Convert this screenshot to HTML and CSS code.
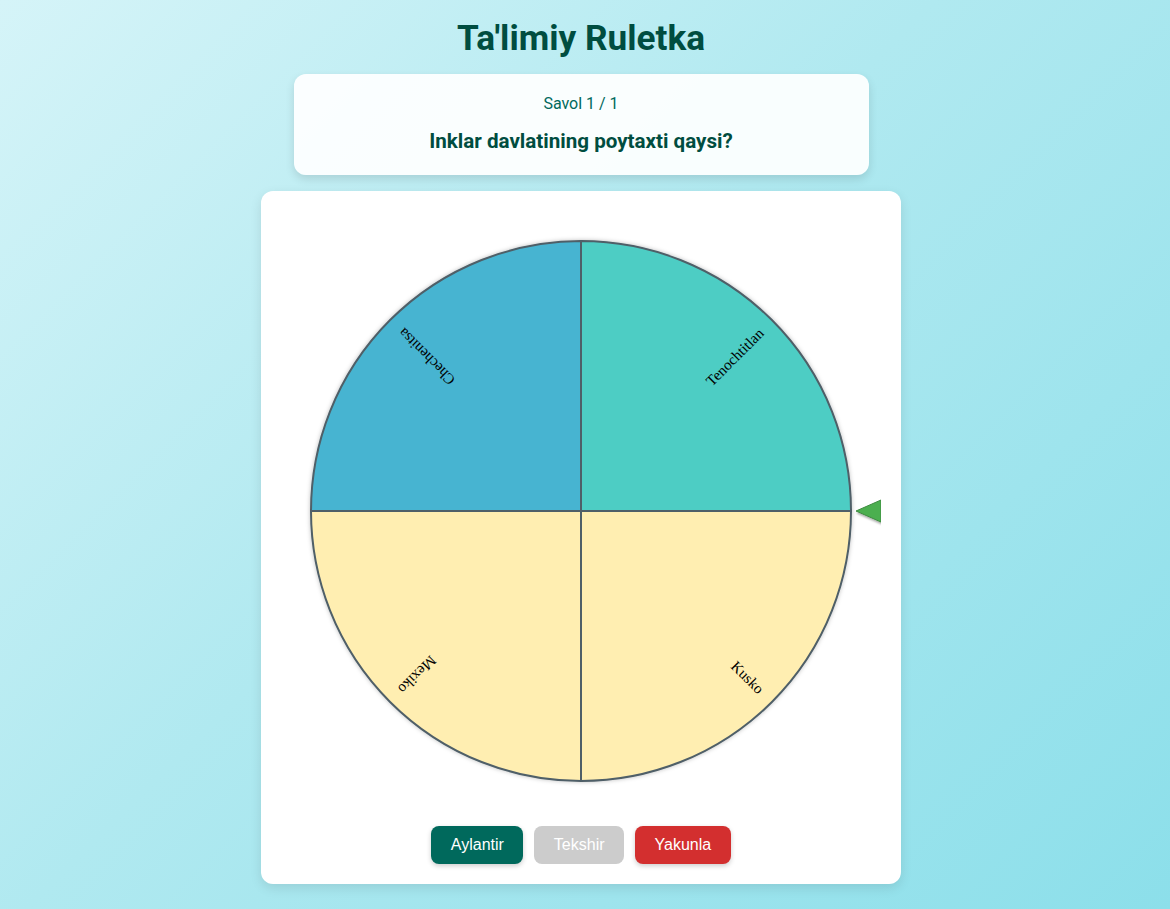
FILE: index.html
```html
<!DOCTYPE html>
<html lang="uz">
<head>
<meta charset="utf-8">
<title>Ta'limiy Ruletka</title>
<link rel="stylesheet" href="styles.css">
</head>
<body>
<div class="page">
  <h1 class="title">Ta'limiy Ruletka</h1>
  <div class="question-card">
    <div class="counter">Savol 1 / 1</div>
    <div class="question">Inklar davlatining poytaxti qaysi?</div>
  </div>
  <div class="wheel-card">
    <svg class="wheel" width="600" height="600" viewBox="0 0 600 600">
      <defs>
        <filter id="sh" x="-10%" y="-10%" width="120%" height="120%">
          <feDropShadow dx="0" dy="0" stdDeviation="2" flood-color="#000" flood-opacity="0.25"/>
        </filter>
        <filter id="psh" x="-30%" y="-30%" width="160%" height="180%">
          <feDropShadow dx="1" dy="2" stdDeviation="1.2" flood-color="#000" flood-opacity="0.35"/>
        </filter>
      </defs>
      <g filter="url(#sh)">
        <path d="M300 300 L570 300 A270 270 0 0 1 300 570 Z" fill="#ffeeb1" stroke="#4f5f67" stroke-width="2"/>
        <path d="M300 300 L300 570 A270 270 0 0 1 30 300 Z" fill="#ffeeb1" stroke="#4f5f67" stroke-width="2"/>
        <path d="M300 300 L30 300 A270 270 0 0 1 300 30 Z" fill="#47b4d1" stroke="#4f5f67" stroke-width="2"/>
        <path d="M300 300 L300 30 A270 270 0 0 1 570 300 Z" fill="#4ecdc4" stroke="#4f5f67" stroke-width="2"/>
      </g>
      <g class="labels">
        <text transform="translate(300 300) rotate(45)" x="255" y="5" text-anchor="end">Kusko</text>
        <text transform="translate(300 300) rotate(135)" x="255" y="5" text-anchor="end">Mexiko</text>
        <text transform="translate(300 300) rotate(225)" x="255" y="5" text-anchor="end">Chechenitsa</text>
        <text transform="translate(300 300) rotate(315)" x="255" y="5" text-anchor="end">Tenochtitlan</text>
      </g>
      <polygon points="575,300 600,289 600,311" fill="#4caf50" stroke="#3d8b40" stroke-width="1" filter="url(#psh)"/>
    </svg>
    <div class="buttons">
      <button class="btn btn-spin">Aylantir</button>
      <button class="btn btn-check" disabled>Tekshir</button>
      <button class="btn btn-end">Yakunla</button>
    </div>
  </div>
</div>
</body>
</html>
```
FILE: styles.css
```css
html, body {
  margin: 0;
  padding: 0;
  min-height: 100%;
}
body {
  font-family: Roboto, "Liberation Sans", Arial, sans-serif;
  background: linear-gradient(135deg, #d5f4f8 0%, #b0e9f0 45%, #8cdfea 100%);
  min-height: 909px;
}
.page {
  display: flex;
  flex-direction: column;
  align-items: center;
  padding-top: 18px;
  padding-right: 8px;
}
.title {
  margin: 0;
  font-size: 35.2px;
  line-height: 41px;
  font-weight: 700;
  color: #004d40;
}
.question-card {
  margin-top: 15px;
  width: 575px;
  box-sizing: border-box;
  padding: 20px 20px 22px;
  background: rgba(255, 255, 255, 0.92);
  border-radius: 12px;
  box-shadow: 0 4px 10px rgba(0, 0, 0, 0.12);
  text-align: center;
}
.counter {
  font-size: 16px;
  line-height: 19px;
  color: #00695c;
  margin-bottom: 17px;
}
.question {
  font-size: 20.6px;
  line-height: 23px;
  font-weight: 700;
  color: #004d40;
}
.wheel-card {
  margin-top: 16px;
  width: 640px;
  box-sizing: border-box;
  padding: 20px;
  background: #ffffff;
  border-radius: 12px;
  box-shadow: 0 4px 12px rgba(0, 0, 0, 0.1);
  display: flex;
  flex-direction: column;
  align-items: center;
}
.wheel {
  display: block;
}
.labels text {
  font-family: "Liberation Serif", "Times New Roman", serif;
  font-size: 15px;
  fill: #000;
}
.buttons {
  margin-top: 15px;
  display: flex;
  gap: 11px;
}
.btn {
  font-family: "Liberation Sans", Arial, sans-serif;
  font-size: 16px;
  line-height: 18px;
  padding: 10px 19.5px;
  border: none;
  border-radius: 8px;
  color: #fff;
  box-shadow: 0 2px 5px rgba(0, 0, 0, 0.2);
  cursor: pointer;
}
.btn-spin { background: #00695c; }
.btn-check { background: #cccccc; box-shadow: none; cursor: default; }
.btn-end { background: #d32f2f; }
```
